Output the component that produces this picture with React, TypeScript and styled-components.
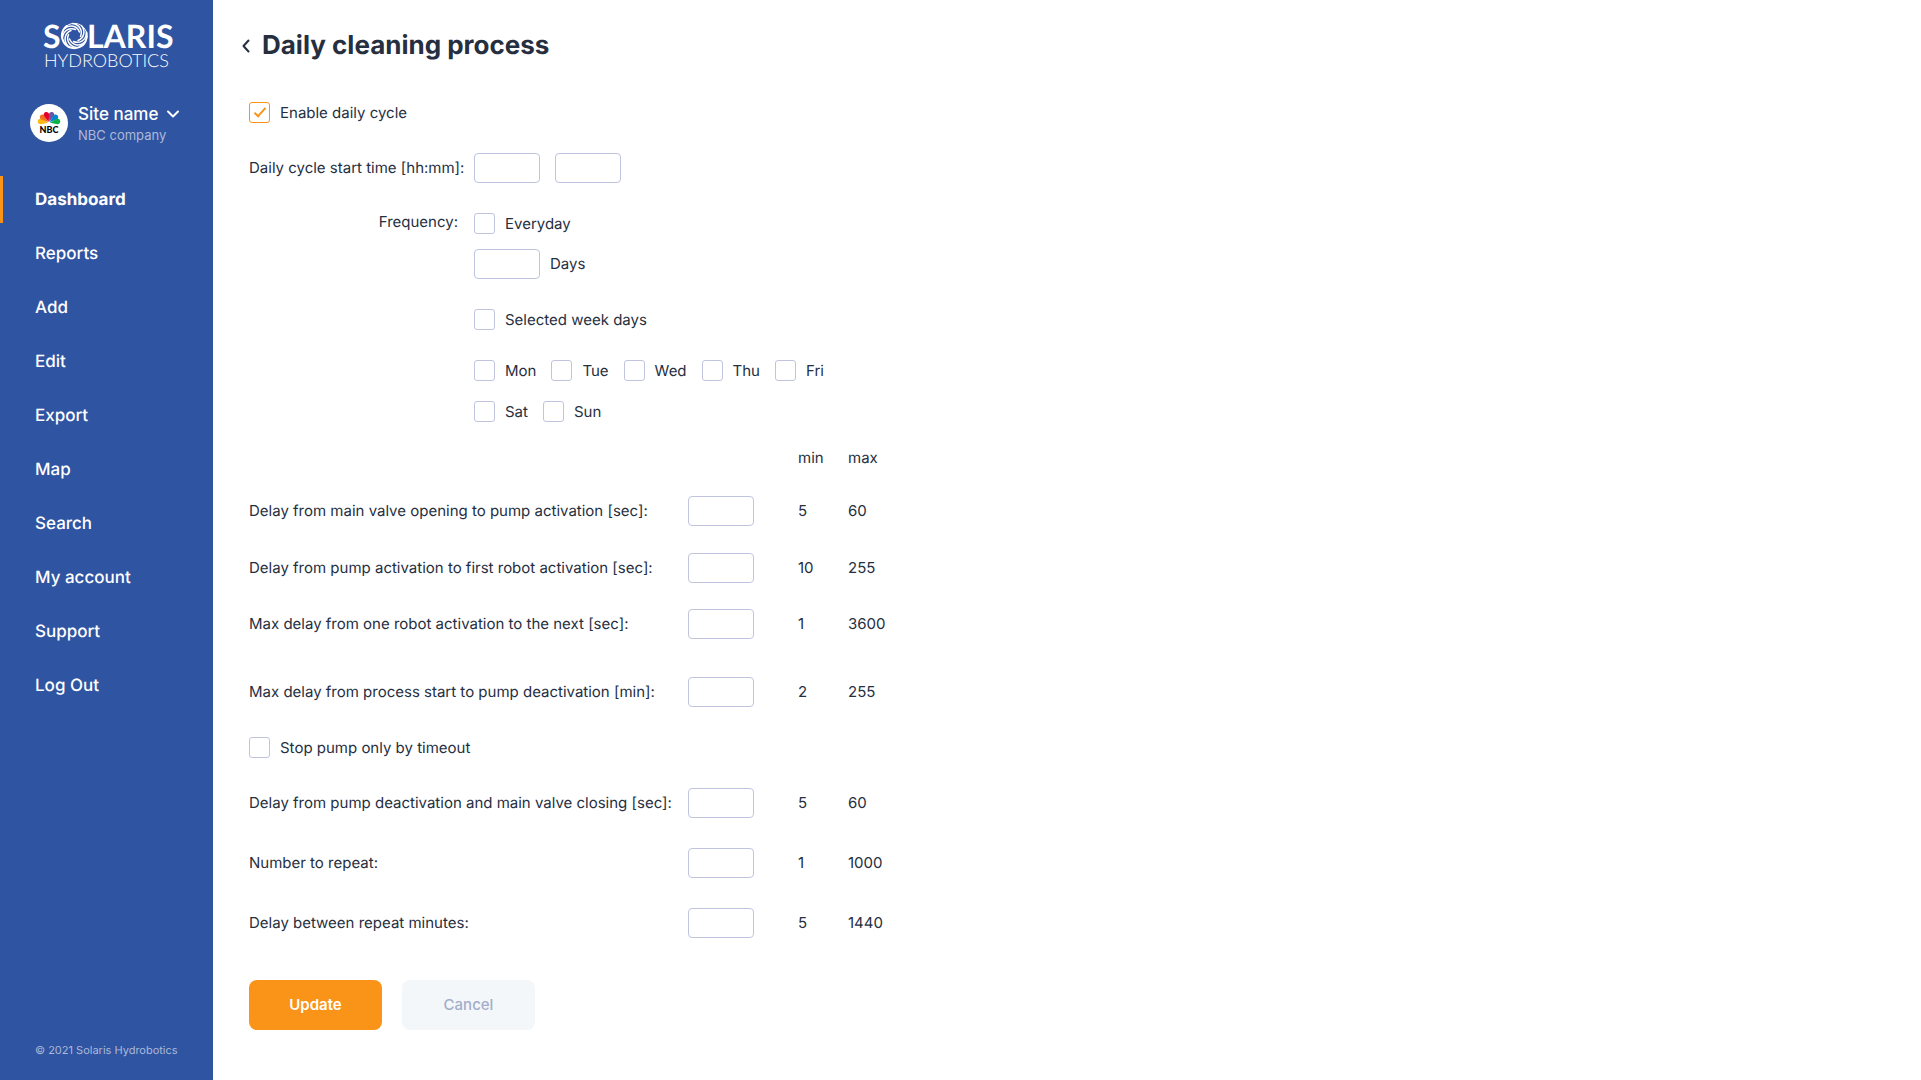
import React, { useState } from 'react';
import styled, { createGlobalStyle } from 'styled-components';

const color = {
  brand: '#2f54a1',
  accent: '#fa9418',
  ink: '#262f3f',
  line: '#c1c4de',
  muted: '#a3adc9',
  soft: '#f3f7fa',
  white: '#ffffff',
};

const GlobalStyle = createGlobalStyle`
  *, *::before, *::after { box-sizing: border-box; }
  body {
    margin: 0;
    background: ${color.white};
    color: ${color.ink};
    font-family: Inter, Roboto, sans-serif;
    font-size: 15px;
    line-height: 20px;
    text-rendering: geometricPrecision;
  }
  button, input { font: inherit; }
`;

const Layout = styled.div`
  display: flex;
  min-height: 100vh;
`;

const Sidebar = styled.aside`
  display: flex;
  flex-direction: column;
  flex: none;
  width: 213px;
  padding: 20px 0;
  background: ${color.brand};
  color: ${color.white};
`;

const LogoLink = styled.a`
  display: block;
  padding: 0 42px;
  line-height: 0;
`;

const LogoArt = styled.svg`
  overflow: visible;
  fill: currentColor;
  color: ${color.white};
`;

const SiteSwitch = styled.button`
  display: flex;
  align-items: center;
  gap: 10px;
  margin: 32px 0;
  padding: 0 30px;
  border: 0;
  background: none;
  color: inherit;
  text-align: left;
  cursor: pointer;
`;

const SiteText = styled.span`
  display: flex;
  flex-direction: column;
`;

const SiteName = styled.span`
  display: flex;
  align-items: center;
  gap: 8px;
  font-size: 17px;
  font-weight: 500;
  line-height: 24px;
  white-space: nowrap;
`;

const Company = styled.span`
  color: #adb9d8;
  font-size: 13px;
  line-height: 18px;
`;

const Nav = styled.nav`
  display: flex;
  flex-direction: column;
  gap: 7px;
`;

const NavLink = styled.a<{ $active?: boolean }>`
  padding: 2px 32px 0;
  border-left: 3px solid ${(p) => (p.$active ? color.accent : 'transparent')};
  color: inherit;
  font-size: 17px;
  font-weight: ${(p) => (p.$active ? 700 : 500)};
  line-height: 45px;
  text-decoration: none;
`;

const Copyright = styled.footer`
  margin-top: auto;
  padding: 0 35px;
  color: #adb9d8;
  font-size: 11px;
  line-height: 20px;
  white-space: nowrap;
`;

const Main = styled.main`
  flex: 1;
  min-width: 0;
  padding: 26px 36px 50px;
`;

const TitleBar = styled.header`
  display: flex;
  align-items: center;
  gap: 8px;
  margin: 0 0 36px -12px;
`;

const BackLink = styled.a`
  display: flex;
  padding: 4px;
  color: ${color.ink};
`;

const Title = styled.h1`
  margin: 0;
  font-size: 26px;
  font-weight: 700;
  line-height: 40px;
`;

const CheckLabel = styled.label`
  display: inline-flex;
  align-items: center;
  gap: 10px;
  line-height: 21px;
  vertical-align: top;
  cursor: pointer;
`;

const CheckBox = styled.input`
  display: grid;
  place-items: center;
  flex: none;
  width: 21px;
  height: 21px;
  margin: 0;
  appearance: none;
  border: 1px solid ${color.line};
  border-radius: 3px;
  background: ${color.white};

  &:checked { border-color: ${color.accent}; }

  &:checked::before {
    content: '';
    width: 12px;
    height: 6px;
    margin-bottom: 3px;
    border: solid ${color.accent};
    border-width: 0 0 2px 2px;
    transform: rotate(-48deg);
  }
`;

const NumberInput = styled.input`
  display: block;
  width: 66px;
  height: 30px;
  padding: 0 8px;
  border: 1px solid ${color.line};
  border-radius: 4px;
  background: ${color.white};
  color: inherit;
`;

const Schedule = styled.div`
  display: grid;
  grid-template-columns: 209px 1fr;
  column-gap: 16px;
  row-gap: 30px;
  margin-top: 30px;
`;

const Caption = styled.span<{ $line: number }>`
  line-height: ${(p) => p.$line}px;
  text-align: right;
  white-space: nowrap;
`;

const TimeFields = styled.div`
  display: flex;
  gap: 15px;
`;

const Frequency = styled.div`
  display: flex;
  flex-direction: column;
  align-items: flex-start;
`;

const DaysLabel = styled.label`
  display: flex;
  align-items: center;
  gap: 10px;
  margin: 15px 0 30px;
`;

const WeekDays = styled.div`
  display: flex;
  flex-wrap: wrap;
  gap: 20px 15px;
  max-width: 380px;
  margin-top: 30px;
`;

const Limits = styled.table`
  width: 650px;
  margin-top: 21px;
  border-collapse: collapse;
  table-layout: fixed;
  line-height: 30px;
`;

const Row = styled.tr<{ $height: number }>`
  height: ${(p) => p.$height}px;
`;

const HeadCell = styled.th<{ $width: number }>`
  width: ${(p) => p.$width}px;
  padding: 0;
  font-weight: 400;
  text-align: left;
  vertical-align: top;
`;

const Cell = styled.td`
  padding: 0;
  vertical-align: top;
`;

const Actions = styled.div`
  display: flex;
  gap: 20px;
  margin-top: 12px;
`;

const Button = styled.button<{ $primary?: boolean }>`
  width: 133px;
  height: 50px;
  border: 0;
  border-radius: 8px;
  background: ${(p) => (p.$primary ? color.accent : color.soft)};
  color: ${(p) => (p.$primary ? color.white : color.muted)};
  font-weight: ${(p) => (p.$primary ? 600 : 500)};
  cursor: pointer;
`;

const navItems = ['Dashboard', 'Reports', 'Add', 'Edit', 'Export', 'Map', 'Search', 'My account', 'Support', 'Log Out'];

const weekDays = ['Mon', 'Tue', 'Wed', 'Thu', 'Fri', 'Sat', 'Sun'];

type Limit = { id: string; label: string; min: number; max: number; height: number };

const startLimits: Limit[] = [
  { id: 'valve-open', label: 'Delay from main valve opening to pump activation [sec]:', min: 5, max: 60, height: 57 },
  { id: 'first-robot', label: 'Delay from pump activation to first robot activation [sec]:', min: 10, max: 255, height: 56 },
  { id: 'next-robot', label: 'Max delay from one robot activation to the next [sec]:', min: 1, max: 3600, height: 68 },
  { id: 'pump-stop', label: 'Max delay from process start to pump deactivation [min]:', min: 2, max: 255, height: 60 },
];

const endLimits: Limit[] = [
  { id: 'valve-close', label: 'Delay from pump deactivation and main valve closing [sec]:', min: 5, max: 60, height: 60 },
  { id: 'repeat', label: 'Number to repeat:', min: 1, max: 1000, height: 60 },
  { id: 'repeat-delay', label: 'Delay between repeat minutes:', min: 5, max: 1440, height: 60 },
];

const bladeAngles = [0, 45, 90, 135, 180, 225, 270, 315];

function Logo() {
  return (
    <LogoArt width="129" height="50" viewBox="0 0 129 50" role="img" aria-label="Solaris Hydrobotics">
      <text x="1" y="28" fontFamily="Lato, sans-serif" fontSize="32" fontWeight="700">S</text>
      <g transform="translate(32.5 15.5)" fill="none" stroke="currentColor" strokeLinecap="round">
        <path d="M-8 -9.500A12.500 12.500 0 1 0 12 -3" strokeWidth="2" />
        <path d="M-8 -9.500A12.500 12.500 0 0 1 12 -3" strokeWidth="1" />
        {bladeAngles.map((angle) => (
          <path key={angle} d="M-2 -12C5 -11 8.500 -5 6 1" strokeWidth="1.500" transform={`rotate(${angle})`} />
        ))}
      </g>
      <text x="45" y="28" fontFamily="Lato, sans-serif" fontSize="32" fontWeight="700">LARIS</text>
      <text x="2" y="47" fontFamily="Lato, sans-serif" fontSize="18" fontWeight="300">HYDROBOTICS</text>
    </LogoArt>
  );
}

function Avatar() {
  const feathers = [
    ['#fdb913', -80], ['#f37021', -48], ['#e4002b', -17], ['#6e55a5', 17], ['#0089d0', 48], ['#0db14b', 80],
  ] as const;
  return (
    <svg width="38" height="38" viewBox="0 0 38 38" aria-hidden="true">
      <circle cx="19" cy="19" r="19" fill="#fff" />
      {feathers.map(([fill, angle]) => (
        <path key={fill} d="M19 18L16.400 11a2.700 2.700 0 1 1 5.200 0z" fill={fill} transform={`rotate(${angle} 19 19)`} />
      ))}
      <text x="19" y="29" textAnchor="middle" fontFamily="Lato, sans-serif" fontSize="9" fontWeight="900">NBC</text>
    </svg>
  );
}

function Check({ label, initial = false }: { label: string; initial?: boolean }) {
  const [checked, setChecked] = useState(initial);
  return (
    <CheckLabel>
      <CheckBox type="checkbox" checked={checked} onChange={(e) => setChecked(e.target.checked)} />
      {label}
    </CheckLabel>
  );
}

function LimitRow({ id, label, min, max, height }: Limit) {
  return (
    <Row $height={height}>
      <Cell><label htmlFor={id}>{label}</label></Cell>
      <Cell><NumberInput id={id} inputMode="numeric" /></Cell>
      <Cell>{min}</Cell>
      <Cell>{max}</Cell>
    </Row>
  );
}

export default function App() {
  return (
    <>
      <GlobalStyle />
      <Layout>
        <Sidebar>
          <LogoLink href="#home"><Logo /></LogoLink>
          <SiteSwitch type="button">
            <Avatar />
            <SiteText>
              <SiteName>
                Site name
                <svg width="14" height="8" viewBox="0 0 14 8" fill="none" stroke="currentColor" strokeWidth="2" strokeLinecap="round" strokeLinejoin="round" aria-hidden="true">
                  <path d="M2 1.500L7 6.500L12 1.500" />
                </svg>
              </SiteName>
              <Company>NBC company</Company>
            </SiteText>
          </SiteSwitch>
          <Nav>
            {navItems.map((item, i) => (
              <NavLink key={item} href="#" $active={i === 0}>{item}</NavLink>
            ))}
          </Nav>
          <Copyright>© 2021 Solaris Hydrobotics</Copyright>
        </Sidebar>
        <Main>
          <TitleBar>
            <BackLink href="#back" aria-label="Back">
              <svg width="9" height="14" viewBox="0 0 9 14" fill="none" stroke="currentColor" strokeWidth="2" strokeLinecap="round" strokeLinejoin="round" aria-hidden="true">
                <path d="M7.500 1.500L2.500 7l5 5.500" />
              </svg>
            </BackLink>
            <Title>Daily cleaning process</Title>
          </TitleBar>
          <form onSubmit={(e) => e.preventDefault()}>
            <Check label="Enable daily cycle" initial />
            <Schedule>
              <Caption $line={30}>Daily cycle start time [hh:mm]:</Caption>
              <TimeFields>
                <NumberInput aria-label="Start hour" inputMode="numeric" />
                <NumberInput aria-label="Start minute" inputMode="numeric" />
              </TimeFields>
              <Caption $line={18}>Frequency:</Caption>
              <Frequency>
                <Check label="Everyday" />
                <DaysLabel><NumberInput inputMode="numeric" />Days</DaysLabel>
                <Check label="Selected week days" />
                <WeekDays>
                  {weekDays.map((day) => <Check key={day} label={day} />)}
                </WeekDays>
              </Frequency>
            </Schedule>
            <Limits>
              <thead>
                <Row $height={53}>
                  <HeadCell $width={439} />
                  <HeadCell $width={110} />
                  <HeadCell $width={50} scope="col">min</HeadCell>
                  <HeadCell $width={51} scope="col">max</HeadCell>
                </Row>
              </thead>
              <tbody>
                {startLimits.map((limit) => <LimitRow key={limit.id} {...limit} />)}
                <Row $height={51}>
                  <Cell colSpan={4}><Check label="Stop pump only by timeout" /></Cell>
                </Row>
                {endLimits.map((limit) => <LimitRow key={limit.id} {...limit} />)}
              </tbody>
            </Limits>
            <Actions>
              <Button type="submit" $primary>Update</Button>
              <Button type="button">Cancel</Button>
            </Actions>
          </form>
        </Main>
      </Layout>
    </>
  );
}
